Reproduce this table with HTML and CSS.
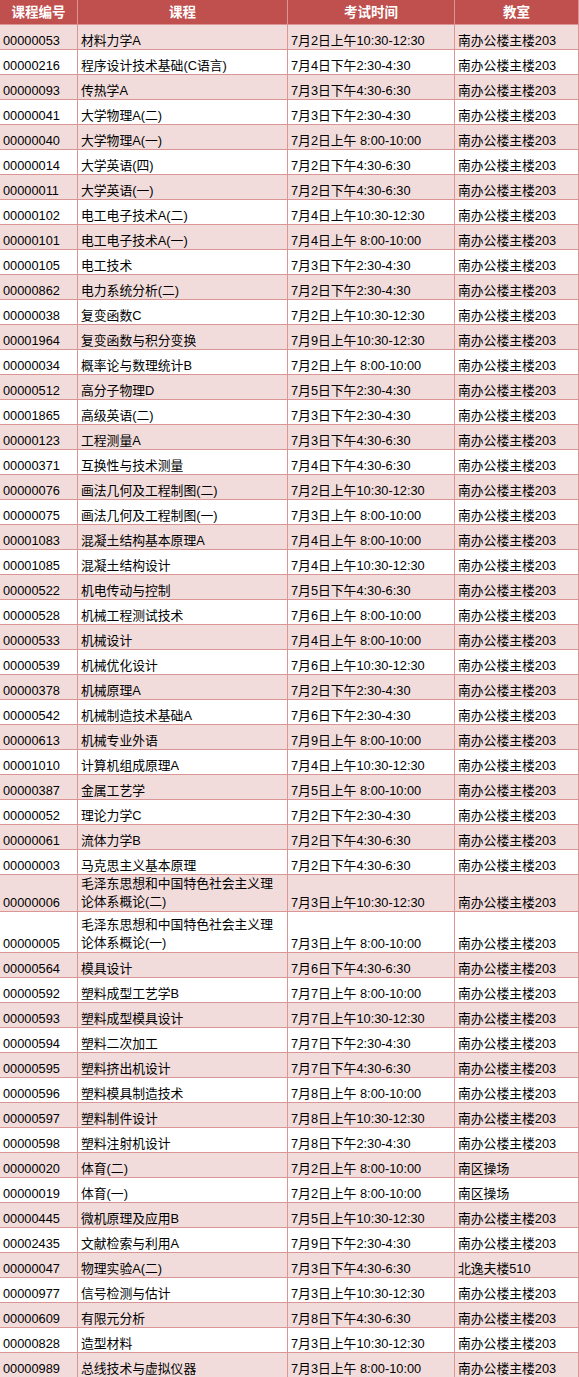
FILE: index.html
```html
<!DOCTYPE html>
<html lang="zh-CN">
<head>
<meta charset="utf-8">
<title>考试安排</title>
<link rel="stylesheet" href="styles.css">
</head>
<body>
<table class="exam">
<thead>
<tr class="head-row"><th class="c1">课程编号</th><th class="c2">课程</th><th class="c3">考试时间</th><th class="c4">教室</th></tr>
</thead>
<tbody>
<tr><td>00000053</td><td>材料力学A</td><td>7月2日上午10:30-12:30</td><td>南办公楼主楼203</td></tr>
<tr><td>00000216</td><td>程序设计技术基础(C语言)</td><td>7月4日下午2:30-4:30</td><td>南办公楼主楼203</td></tr>
<tr><td>00000093</td><td>传热学A</td><td>7月3日下午4:30-6:30</td><td>南办公楼主楼203</td></tr>
<tr><td>00000041</td><td>大学物理A(二)</td><td>7月3日下午2:30-4:30</td><td>南办公楼主楼203</td></tr>
<tr><td>00000040</td><td>大学物理A(一)</td><td>7月2日上午 8:00-10:00</td><td>南办公楼主楼203</td></tr>
<tr><td>00000014</td><td>大学英语(四)</td><td>7月2日下午4:30-6:30</td><td>南办公楼主楼203</td></tr>
<tr><td>00000011</td><td>大学英语(一)</td><td>7月2日下午4:30-6:30</td><td>南办公楼主楼203</td></tr>
<tr><td>00000102</td><td>电工电子技术A(二)</td><td>7月4日上午10:30-12:30</td><td>南办公楼主楼203</td></tr>
<tr><td>00000101</td><td>电工电子技术A(一)</td><td>7月4日上午 8:00-10:00</td><td>南办公楼主楼203</td></tr>
<tr><td>00000105</td><td>电工技术</td><td>7月3日下午2:30-4:30</td><td>南办公楼主楼203</td></tr>
<tr><td>00000862</td><td>电力系统分析(二)</td><td>7月2日下午2:30-4:30</td><td>南办公楼主楼203</td></tr>
<tr><td>00000038</td><td>复变函数C</td><td>7月2日上午10:30-12:30</td><td>南办公楼主楼203</td></tr>
<tr><td>00001964</td><td>复变函数与积分变换</td><td>7月9日上午10:30-12:30</td><td>南办公楼主楼203</td></tr>
<tr><td>00000034</td><td>概率论与数理统计B</td><td>7月2日上午 8:00-10:00</td><td>南办公楼主楼203</td></tr>
<tr><td>00000512</td><td>高分子物理D</td><td>7月5日下午2:30-4:30</td><td>南办公楼主楼203</td></tr>
<tr><td>00001865</td><td>高级英语(二)</td><td>7月3日下午2:30-4:30</td><td>南办公楼主楼203</td></tr>
<tr><td>00000123</td><td>工程测量A</td><td>7月3日下午4:30-6:30</td><td>南办公楼主楼203</td></tr>
<tr><td>00000371</td><td>互换性与技术测量</td><td>7月4日下午4:30-6:30</td><td>南办公楼主楼203</td></tr>
<tr><td>00000076</td><td>画法几何及工程制图(二)</td><td>7月2日上午10:30-12:30</td><td>南办公楼主楼203</td></tr>
<tr><td>00000075</td><td>画法几何及工程制图(一)</td><td>7月3日上午 8:00-10:00</td><td>南办公楼主楼203</td></tr>
<tr><td>00001083</td><td>混凝土结构基本原理A</td><td>7月4日上午 8:00-10:00</td><td>南办公楼主楼203</td></tr>
<tr><td>00001085</td><td>混凝土结构设计</td><td>7月4日上午10:30-12:30</td><td>南办公楼主楼203</td></tr>
<tr><td>00000522</td><td>机电传动与控制</td><td>7月5日下午4:30-6:30</td><td>南办公楼主楼203</td></tr>
<tr><td>00000528</td><td>机械工程测试技术</td><td>7月6日上午 8:00-10:00</td><td>南办公楼主楼203</td></tr>
<tr><td>00000533</td><td>机械设计</td><td>7月4日上午 8:00-10:00</td><td>南办公楼主楼203</td></tr>
<tr><td>00000539</td><td>机械优化设计</td><td>7月6日上午10:30-12:30</td><td>南办公楼主楼203</td></tr>
<tr><td>00000378</td><td>机械原理A</td><td>7月2日下午2:30-4:30</td><td>南办公楼主楼203</td></tr>
<tr><td>00000542</td><td>机械制造技术基础A</td><td>7月6日下午2:30-4:30</td><td>南办公楼主楼203</td></tr>
<tr><td>00000613</td><td>机械专业外语</td><td>7月9日上午 8:00-10:00</td><td>南办公楼主楼203</td></tr>
<tr><td>00001010</td><td>计算机组成原理A</td><td>7月4日上午10:30-12:30</td><td>南办公楼主楼203</td></tr>
<tr><td>00000387</td><td>金属工艺学</td><td>7月5日上午 8:00-10:00</td><td>南办公楼主楼203</td></tr>
<tr><td>00000052</td><td>理论力学C</td><td>7月2日下午2:30-4:30</td><td>南办公楼主楼203</td></tr>
<tr><td>00000061</td><td>流体力学B</td><td>7月2日下午4:30-6:30</td><td>南办公楼主楼203</td></tr>
<tr><td>00000003</td><td>马克思主义基本原理</td><td>7月2日下午4:30-6:30</td><td>南办公楼主楼203</td></tr>
<tr class="tall-a"><td>00000006</td><td class="wrap">毛泽东思想和中国特色社会主义理<br>论体系概论(二)</td><td>7月3日上午10:30-12:30</td><td>南办公楼主楼203</td></tr>
<tr class="tall-b"><td>00000005</td><td class="wrap">毛泽东思想和中国特色社会主义理<br>论体系概论(一)</td><td>7月3日上午 8:00-10:00</td><td>南办公楼主楼203</td></tr>
<tr><td>00000564</td><td>模具设计</td><td>7月6日下午4:30-6:30</td><td>南办公楼主楼203</td></tr>
<tr><td>00000592</td><td>塑料成型工艺学B</td><td>7月7日上午 8:00-10:00</td><td>南办公楼主楼203</td></tr>
<tr><td>00000593</td><td>塑料成型模具设计</td><td>7月7日上午10:30-12:30</td><td>南办公楼主楼203</td></tr>
<tr><td>00000594</td><td>塑料二次加工</td><td>7月7日下午2:30-4:30</td><td>南办公楼主楼203</td></tr>
<tr><td>00000595</td><td>塑料挤出机设计</td><td>7月7日下午4:30-6:30</td><td>南办公楼主楼203</td></tr>
<tr><td>00000596</td><td>塑料模具制造技术</td><td>7月8日上午 8:00-10:00</td><td>南办公楼主楼203</td></tr>
<tr><td>00000597</td><td>塑料制件设计</td><td>7月8日上午10:30-12:30</td><td>南办公楼主楼203</td></tr>
<tr><td>00000598</td><td>塑料注射机设计</td><td>7月8日下午2:30-4:30</td><td>南办公楼主楼203</td></tr>
<tr><td>00000020</td><td>体育(二)</td><td>7月2日上午 8:00-10:00</td><td>南区操场</td></tr>
<tr><td>00000019</td><td>体育(一)</td><td>7月2日上午 8:00-10:00</td><td>南区操场</td></tr>
<tr><td>00000445</td><td>微机原理及应用B</td><td>7月5日上午10:30-12:30</td><td>南办公楼主楼203</td></tr>
<tr><td>00002435</td><td>文献检索与利用A</td><td>7月9日下午2:30-4:30</td><td>南办公楼主楼203</td></tr>
<tr><td>00000047</td><td>物理实验A(二)</td><td>7月3日下午4:30-6:30</td><td>北逸夫楼510</td></tr>
<tr><td>00000977</td><td>信号检测与估计</td><td>7月3日上午10:30-12:30</td><td>南办公楼主楼203</td></tr>
<tr><td>00000609</td><td>有限元分析</td><td>7月8日下午4:30-6:30</td><td>南办公楼主楼203</td></tr>
<tr><td>00000828</td><td>造型材料</td><td>7月3日上午10:30-12:30</td><td>南办公楼主楼203</td></tr>
<tr><td>00000989</td><td>总线技术与虚拟仪器</td><td>7月3日上午 8:00-10:00</td><td>南办公楼主楼203</td></tr>
</tbody>
</table>
</body>
</html>
```
FILE: styles.css
```css
html, body {
  margin: 0;
  padding: 0;
  background: #ffffff;
}

.exam {
  border-collapse: separate;
  border-spacing: 0;
  table-layout: fixed;
  width: 579px;
  font-family: "Liberation Sans", "Noto Sans CJK SC", sans-serif;
  color: #000000;
}

.exam th,
.exam td {
  box-sizing: border-box;
  border-right: 1px solid #d99694;
  border-bottom: 1px solid #d99694;
  padding: 0 0 0 3px;
  white-space: nowrap;
  overflow: hidden;
}

.exam th {
  height: 25px;
  background: #c0504d;
  color: #ffffff;
  font-weight: bold;
  font-size: 13.5px;
  line-height: 18px;
  text-align: center;
  vertical-align: bottom;
  padding: 0 0 2px 0;
}

.exam .c1 { width: 78px; }
.exam .c2 { width: 210px; }
.exam .c3 { width: 167px; }
.exam .c4 { width: 124px; }

.exam td {
  height: 25px;
  font-size: 12.8px;
  line-height: 17px;
  vertical-align: bottom;
  text-align: left;
}

.exam td.wrap {
  line-height: 18px;
}

.exam tbody tr:nth-child(odd) td {
  background: #f2dcdb;
}

.exam tbody tr.tall-a td {
  height: 36px;
}

.exam tbody tr.tall-b td {
  height: 41px;
}
```
